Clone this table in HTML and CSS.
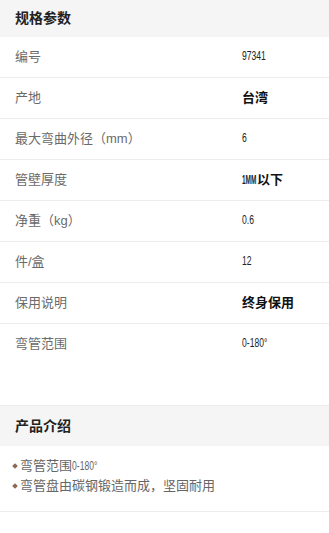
FILE: index.html
```html
<!DOCTYPE html>
<html lang="zh-CN">
<head>
<meta charset="utf-8">
<title>规格参数</title>
<link rel="stylesheet" href="styles.css">
</head>
<body>
<section class="spec">
  <div class="head">规格参数</div>
  <div class="row"><span class="label">编号</span><span class="value"><span class="num">97341</span></span></div>
  <div class="row"><span class="label">产地</span><span class="value bold">台湾</span></div>
  <div class="row"><span class="label">最大弯曲外径（mm）</span><span class="value"><span class="num">6</span></span></div>
  <div class="row"><span class="label">管壁厚度</span><span class="value bold"><span class="num">1MM</span>以下</span></div>
  <div class="row"><span class="label">净重（kg）</span><span class="value"><span class="num">0.6</span></span></div>
  <div class="row"><span class="label">件/盒</span><span class="value"><span class="num">12</span></span></div>
  <div class="row"><span class="label">保用说明</span><span class="value bold">终身保用</span></div>
  <div class="row last"><span class="label">弯管范围</span><span class="value"><span class="num">0-180°</span></span></div>
</section>
<section class="intro">
  <div class="head">产品介绍</div>
  <ul class="list">
    <li>弯管范围<span class="num">0-180°</span></li>
    <li>弯管盘由碳钢锻造而成，坚固耐用</li>
  </ul>
</section>
</body>
</html>
```
FILE: styles.css
```css
html, body {
  margin: 0;
  padding: 0;
  background: #fff;
}
body {
  font-family: "Liberation Sans", "Noto Sans CJK SC", sans-serif;
  font-size: 13px;
  color: #333;
}
.head {
  height: 37px;
  box-sizing: border-box;
  padding: 0 0 3px 15px;
  background: #f5f5f5;
  display: flex;
  align-items: center;
  font-size: 14px;
  font-weight: bold;
  color: #222;
}
.row {
  height: 40px;
  box-sizing: content-box;
  display: flex;
  align-items: center;
  border-bottom: 1px solid #ececec;
  padding-left: 15px;
}
.row > span {
  position: relative;
  top: -2px;
}
.row.last {
  border-bottom: none;
}
.label {
  width: 227px;
  color: #6a6a6a;
  font-size: 13px;
}
.value {
  color: #222;
  font-size: 13px;
}
.value.bold {
  font-weight: bold;
  color: #111;
}
.num {
  display: inline-block;
  font-size: 13px;
  transform: scaleX(0.66);
  transform-origin: left center;
  margin-right: -0.34em;
}
.value .num {
  margin-right: 0;
  color: #222;
}
.value.bold .num {
  transform: scaleX(0.5);
  margin-right: -14px;
}
.intro {
  margin-top: 41px;
  border-top: 1px solid #ececec;
  border-bottom: 1px solid #ececec;
}
.intro .head {
  height: 40px;
}
.list {
  list-style: none;
  margin: 0;
  padding: 11px 0 14px 12px;
}
.list li {
  line-height: 20px;
  height: 20px;
  color: #666;
  font-size: 13px;
  display: flex;
  align-items: center;
  position: relative;
  top: -1px;
}
.list li::before {
  content: "";
  width: 4px;
  height: 4px;
  background: #8a6b55;
  transform: rotate(45deg);
  margin: 0 3px 0 1px;
}
.list li .num {
  margin-right: -14px;
  color: #666;
}
```
